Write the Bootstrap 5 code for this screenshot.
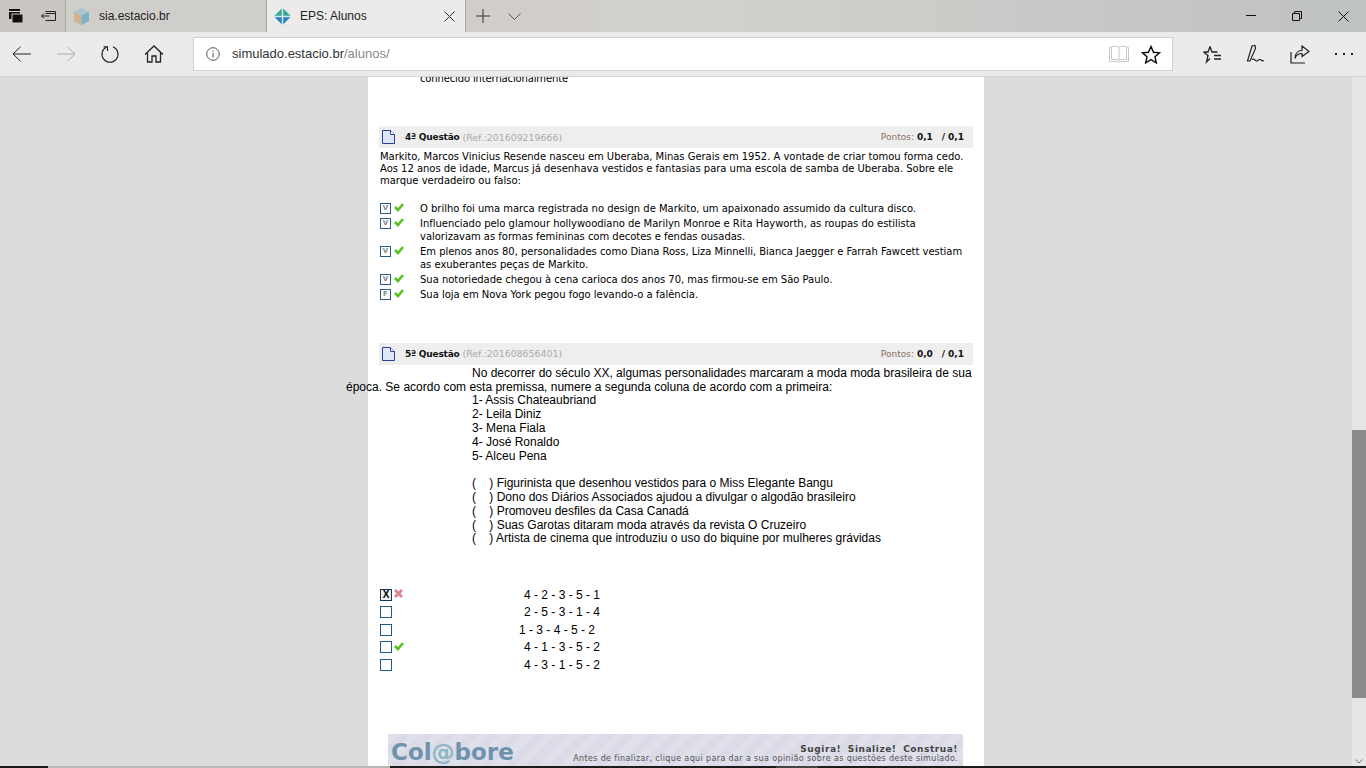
<!DOCTYPE html>
<html lang="pt-BR">
<head>
  <meta charset="UTF-8" />
  <title>EPS: Alunos</title>
  <link href="https://cdn.jsdelivr.net/npm/bootstrap@5.3.3/dist/css/bootstrap.min.css" rel="stylesheet" />
  <style>
    html, body { height: 768px; overflow: hidden; }
    body { font-family: "Liberation Sans", Arial, sans-serif; background: #dcdcdc; color: #000; }

    /* browser chrome */
    .tab-bar { height: 32px; background: linear-gradient(90deg, #c9c6c1 0, #d3d1cd 50%, #bfc2c2 100%); }
    .tab-tool { width: 32px; height: 32px; }
    .tab-tool.wide { width: 33px; }
    .tab-item { height: 32px; width: 201px; padding-left: 7px; gap: 9px; font-size: 12px; color: #222; border-left: 1px solid #a9a7a3; background: #d0ceca; }
    .tab-item.is-active { background: #ebebeb; width: 200px; border-right: 1px solid #a9a7a3; }
    .tab-close { margin-left: auto; margin-right: 10px; }
    .tab-new { padding-left: 10px; gap: 18px; }
    .win-btn { width: 46px; height: 32px; }
    .tool-bar { height: 45px; background: #ebebeb; border-bottom: 1px solid #d4d4d4; }
    .tool-btn { width: 44px; height: 44px; flex: none; }
    .addr-box { width: 980px; height: 34px; margin-left: 17px; background: #fff; border: 1px solid #d0d0d0; font-size: 13px; color: #333; padding-left: 12px; }
    .addr-box .dim { color: #888; }
    .addr-star { margin: 0 11px 0 4px; }

    /* page area */
    .page-view { height: 689px; overflow: hidden; }
    .page-canvas { flex: 1; height: 689px; overflow: hidden; }
    .sheet { width: 616px; margin-left: 368px; height: 693px; background: #fff; padding: 0 11px; }
    .sheet-top { font-family: "DejaVu Sans", Verdana, sans-serif; font-size: 10px; letter-spacing: -.14px; line-height: 12px; padding-left: 41px; margin-top: -4px; height: 53px; }
    .q-head { font-family: "DejaVu Sans", Verdana, sans-serif; font-size: 9px; height: 22px; background: #eeeeee; padding: 2px 9px 0 3px; }
    .q-head svg { margin-top: -2px; }
    .q-head > b { font-weight: 700; color: #111; margin-left: 10px; letter-spacing: -.2px; }
    .q-ref { color: #aaa; margin-left: 3px; font-size: 9.400px; }
    .q-score { margin-left: auto; color: #8b6d5c; }
    .q-score b { margin-left: 3px; color: #111; }
    .q-text { font-family: "DejaVu Sans", Verdana, sans-serif; font-size: 10px; letter-spacing: -.025px; line-height: 12px; padding: 3px 1px 0 1px; }
    .tf-list { margin-top: 15px; font-family: "DejaVu Sans", Verdana, sans-serif; font-size: 10px; letter-spacing: -.025px; line-height: 13px; }
    .tf-row { display: flex; padding-left: 1px; margin-bottom: 2px; }
    .tf-mark { width: 40px; flex: none; display: flex; gap: 3px; align-items: flex-start; }
    .tf-box { width: 11px; height: 11px; border: 1px solid #2a5a8c; font-size: 7px; line-height: 9px; text-align: center; color: #888; font-weight: 700; margin-top: 1px; }
    .q-five { margin-top: 41.500px; }
    .arial-block { font-size: 12px; line-height: 13.800px; padding-left: 93px; }
    .arial-lead { font-size: 12px; line-height: 13.800px; margin: 2.400px 1px 0 -33px; text-indent: 126px; width: 626px; }
    .arial-gap { margin-top: 13.800px; }
    .opt-list { margin-top: 42.300px; font-size: 12px; }
    .opt-row { display: flex; height: 17.500px; padding-left: 1px; }
    .opt-mark { width: 40px; flex: none; display: flex; gap: 2px; align-items: flex-start; }
    .opt-box { width: 12px; height: 12px; border: 1px solid #1f5a8f; font-size: 10px; line-height: 10px; text-align: center; font-weight: 700; }
    .opt-box.picked { background: #eee; border-color: #12385c; }
    .opt-val { padding-left: 104px; line-height: 14px; margin-top: -1px; }
    .opt-val.near { padding-left: 99px; }
    .colab { width: 575px; height: 34px; margin: 58px 0 0 9px; background: repeating-linear-gradient(135deg, #dfe0ea 0 8px, #dadbe6 8px 16px); font-family: "DejaVu Sans", Verdana, sans-serif; padding: 0 5px 0 3px; }
    .colab-name { font-size: 23px; font-weight: 700; color: #6f93ad; line-height: 36px; }
    .colab-name i { font-style: normal; color: #8cb6c6; }
    .colab-side { text-align: right; line-height: 10px; padding-top: 10px; }
    .colab-side b { display: block; font-size: 9px; letter-spacing: .55px; word-spacing: 3px; color: #444; }
    .colab-side span { display: block; font-size: 8px; letter-spacing: .37px; color: #555; }

    .scroll-rail { width: 14px; height: 689px; background: #e6e6e6; position: relative; }
    .scroll-thumb { position: absolute; top: 353px; left: 0; width: 14px; height: 268px; background: #8a8a8a; }
    .scroll-down { position: absolute; bottom: 2px; left: 3px; }

    /* edge of the taskbar under the window */
    .task-strip { height: 2px; background: #1c1c1c; }
    .strip-gap { width: 342px; margin-left: 48px; background: #b8b8b8; }
    .strip-soft { width: 42px; margin-left: 386px; background: #444; }
  </style>
</head>
<body>
  <!-- tab strip -->
  <div class="tab-bar d-flex">
    <div class="tab-tool d-flex align-items-center justify-content-center">
      <svg width="16" height="16" viewBox="0 0 16 16"><rect x="1" y="1" width="11" height="10" fill="#111"/><rect x="1" y="3" width="11" height="1" fill="#ddd"/><rect x="4" y="6" width="11" height="9" fill="#111" stroke="#cfccc8"/></svg>
    </div>
    <div class="tab-tool wide d-flex align-items-center justify-content-center">
      <svg width="16" height="16" viewBox="0 0 16 16" fill="none" stroke="#222"><path d="M4.500 3.500h10v9h-10M.5 8h8M3 5.500L.5 8 3 10.500M4.500 5.500h10"/></svg>
    </div>
    <div class="tab-item d-flex align-items-center">
      <svg width="17" height="17" viewBox="0 0 16 16"><path d="M8 0l7 3.500v9L8 16l-7-3.500v-9z" fill="#a9c6cc"/><path d="M1 3.500L8 7v9l-7-3.500z" fill="#d2b48c"/><path d="M8 7l7-3.500v9L8 16z" fill="#7fb2c4"/></svg>
      <span>sia.estacio.br</span>
    </div>
    <div class="tab-item is-active d-flex align-items-center">
      <svg width="17" height="17" viewBox="0 0 16 16"><path d="M8 0l8 8-8 8-8-8z" fill="#2a7fc0"/><path d="M8 0l8 8H0z" fill="#3aa98f"/><path d="M7.300 0h1.400v16H7.300zM0 7.300h16v1.400H0z" fill="#cfeaea"/></svg>
      <span>EPS: Alunos</span>
      <svg class="tab-close" width="11" height="11" viewBox="0 0 11 11" stroke="#333"><path d="M.5.500l10 10M10.500.500l-10 10"/></svg>
    </div>
    <div class="tab-new d-flex align-items-center">
      <svg width="14" height="14" viewBox="0 0 14 14" stroke="#333"><path d="M7 0v14M0 7h14"/></svg>
      <svg width="13" height="7" viewBox="0 0 13 7" fill="none" stroke="#555"><path d="M.5.500l6 6 6-6"/></svg>
    </div>
    <div class="ms-auto d-flex">
      <div class="win-btn d-flex align-items-center justify-content-center"><svg width="10" height="2"><path d="M0 .5h10" stroke="#111"/></svg></div>
      <div class="win-btn d-flex align-items-center justify-content-center"><svg width="10" height="10" fill="none" stroke="#111"><path d="M.5 2.500h7v7h-7zM2.500 2.500v-2h7v7h-2"/></svg></div>
      <div class="win-btn d-flex align-items-center justify-content-center"><svg width="11" height="11" stroke="#111"><path d="M.5.500l10 10M10.500.500l-10 10"/></svg></div>
    </div>
  </div>

  <!-- address bar -->
  <div class="tool-bar d-flex align-items-center">
    <div class="tool-btn d-flex align-items-center justify-content-center">
      <svg width="20" height="16" viewBox="0 0 20 16" fill="none" stroke="#222"><path d="M19 8H1M8.500.800L1 8l7.500 7.200"/></svg>
    </div>
    <div class="tool-btn d-flex align-items-center justify-content-center">
      <svg width="20" height="16" viewBox="0 0 20 16" fill="none" stroke="#aaa"><path d="M1 8h18M11.500.800L19 8l-7.500 7.200"/></svg>
    </div>
    <div class="tool-btn d-flex align-items-center justify-content-center">
      <svg width="20" height="20" viewBox="0 0 20 20" fill="none" stroke="#222" stroke-width="1.100"><path d="M7 2.800A8 8 0 1 0 13 2.800M7.500 7V2.800H3.500"/></svg>
    </div>
    <div class="tool-btn d-flex align-items-center justify-content-center">
      <svg width="20" height="18" viewBox="0 0 20 18" fill="none" stroke="#222" stroke-width="1.300"><path d="M1 9.500L10 1l9 8.500M3.500 8v9h4.500v-6h4v6h4.500V8"/></svg>
    </div>
    <div class="addr-box d-flex align-items-center gap-2">
      <svg width="14" height="14" viewBox="0 0 14 14" fill="none" stroke="#555"><circle cx="7" cy="7" r="6.300"/><path d="M7 6v4.500M7 3.500v1.200"/></svg>
      <span class="ms-1">simulado.estacio.br<span class="dim">/alunos/</span></span>
      <svg class="ms-auto" width="20" height="18" viewBox="0 0 20 18" fill="none" stroke="#c8c8c8"><path d="M.5 2.500h1M18.500 2.500h1v14h-8l-1.500 1-1.500-1h-8v-14M2.500 1.500h6l1.500 1 1.500-1h6v13h-6l-1.500 1-1.500-1h-6zM10 2.500v13"/></svg>
      <svg class="addr-star" width="20" height="19" viewBox="0 0 20 19" fill="none" stroke="#111" stroke-width="1.500"><path d="M10 1.500l2.500 5.700 6 .6-4.500 4 1.300 6L10 14.700l-5.300 3.100 1.300-6-4.500-4 6-.6z"/></svg>
    </div>
    <div class="d-flex align-items-center ms-auto">
      <div class="tool-btn d-flex align-items-center justify-content-center">
        <svg width="20" height="19" viewBox="0 0 20 19" fill="none" stroke="#222" stroke-width="1.300"><path d="M8 1.500L10 7H15.500M1.500 7H6L8 1.500M1.500 7L6 10.500 4.500 17 8 13.500M12 10.500h7M12 14h7"/></svg>
      </div>
      <div class="tool-btn d-flex align-items-center justify-content-center">
        <svg width="20" height="20" viewBox="0 0 20 20" fill="none" stroke="#222" stroke-width="1.200"><path d="M1.500 17L6 2l3-.5.500 3L4 17zM6 15.500c3-1.500 3 2 5 1.500s2-3 4-1c1 1 2 1 3 .5"/></svg>
      </div>
      <div class="tool-btn d-flex align-items-center justify-content-center">
        <svg width="20" height="19" viewBox="0 0 20 19" fill="none" stroke="#222" stroke-width="1.200"><path d="M1 7v11h14M12 1l7 5.500-7 5V8.500c-4 0-6 1.500-7 5 0-5 3-8 7-8z"/></svg>
      </div>
      <div class="tool-btn d-flex align-items-center justify-content-center">
        <svg width="20" height="3" fill="#222"><rect x="1" y="0" width="2" height="2"/><rect x="9" y="0" width="2" height="2"/><rect x="17" y="0" width="2" height="2"/></svg>
      </div>
    </div>
  </div>

  <!-- page -->
  <div class="page-view d-flex">
    <div class="page-canvas">
      <div class="sheet">
        <div class="sheet-top">conhecido internacionalmente</div>

        <div class="q-head d-flex align-items-center">
          <svg width="13" height="14" viewBox="0 0 13 14"><path d="M.5.500h8l4 4v9H.5z" fill="#dfe6f7" stroke="#2b3f9e"/><path d="M8.500.500v4h4" fill="#fff" stroke="#2b3f9e"/></svg>
          <b>4ª Questão</b><span class="q-ref">(Ref.:201609219666)</span>
          <span class="q-score">Pontos:<b>0,1</b> &nbsp;<b>/ 0,1</b></span>
        </div>
        <div class="q-text">Markito, Marcos Vinicius Resende nasceu em Uberaba, Minas Gerais em 1952. A vontade de criar tomou forma cedo. Aos 12 anos de idade, Marcus já desenhava vestidos e fantasias para uma escola de samba de Uberaba. Sobre ele marque verdadeiro ou falso:</div>

        <div class="tf-list">
          <div class="tf-row">
            <div class="tf-mark"><div class="tf-box">V</div><svg width="10" height="10" viewBox="0 0 10 10"><path d="M1 5l3 3 5-6" fill="none" stroke="#58c322" stroke-width="2.600"/></svg></div>
            <div>O brilho foi uma marca registrada no design de Markito, um apaixonado assumido da cultura disco.</div>
          </div>
          <div class="tf-row">
            <div class="tf-mark"><div class="tf-box">V</div><svg width="10" height="10" viewBox="0 0 10 10"><path d="M1 5l3 3 5-6" fill="none" stroke="#58c322" stroke-width="2.600"/></svg></div>
            <div>Influenciado pelo glamour hollywoodiano de Marilyn Monroe e Rita Hayworth, as roupas do estilista valorizavam as formas femininas com decotes e fendas ousadas.</div>
          </div>
          <div class="tf-row">
            <div class="tf-mark"><div class="tf-box">V</div><svg width="10" height="10" viewBox="0 0 10 10"><path d="M1 5l3 3 5-6" fill="none" stroke="#58c322" stroke-width="2.600"/></svg></div>
            <div>Em plenos anos 80, personalidades como Diana Ross, Liza Minnelli, Bianca Jaegger e Farrah Fawcett vestiam as exuberantes peças de Markito.</div>
          </div>
          <div class="tf-row">
            <div class="tf-mark"><div class="tf-box">V</div><svg width="10" height="10" viewBox="0 0 10 10"><path d="M1 5l3 3 5-6" fill="none" stroke="#58c322" stroke-width="2.600"/></svg></div>
            <div>Sua notoriedade chegou à cena carioca dos anos 70, mas firmou-se em São Paulo.</div>
          </div>
          <div class="tf-row">
            <div class="tf-mark"><div class="tf-box">F</div><svg width="10" height="10" viewBox="0 0 10 10"><path d="M1 5l3 3 5-6" fill="none" stroke="#58c322" stroke-width="2.600"/></svg></div>
            <div>Sua loja em Nova York pegou fogo levando-o a falência.</div>
          </div>
        </div>

        <div class="q-head q-five d-flex align-items-center">
          <svg width="13" height="14" viewBox="0 0 13 14"><path d="M.5.500h8l4 4v9H.5z" fill="#dfe6f7" stroke="#2b3f9e"/><path d="M8.500.500v4h4" fill="#fff" stroke="#2b3f9e"/></svg>
          <b>5ª Questão</b><span class="q-ref">(Ref.:201608656401)</span>
          <span class="q-score">Pontos:<b>0,0</b> &nbsp;<b>/ 0,1</b></span>
        </div>
        <p class="arial-lead mb-0">No decorrer do século XX, algumas personalidades marcaram a moda moda brasileira de sua época. Se acordo com esta premissa, numere a segunda coluna de acordo com a primeira:</p>
        <div class="arial-block">
          <div>1- Assis Chateaubriand</div>
          <div>2- Leila Diniz</div>
          <div>3- Mena Fiala</div>
          <div>4- José Ronaldo</div>
          <div>5- Alceu Pena</div>
          <div class="arial-gap">(&nbsp;&nbsp;&nbsp; ) Figurinista que desenhou vestidos para o Miss Elegante Bangu</div>
          <div>(&nbsp;&nbsp;&nbsp; ) Dono dos Diários Associados ajudou a divulgar o algodão brasileiro</div>
          <div>(&nbsp;&nbsp;&nbsp; ) Promoveu desfiles da Casa Canadá</div>
          <div>(&nbsp;&nbsp;&nbsp; ) Suas Garotas ditaram moda através da revista O Cruzeiro</div>
          <div>(&nbsp;&nbsp;&nbsp; ) Artista de cinema que introduziu o uso do biquine por mulheres grávidas</div>
        </div>

        <div class="opt-list">
          <div class="opt-row">
            <div class="opt-mark"><div class="opt-box picked">X</div><svg width="9" height="9" viewBox="0 0 9 9"><path d="M1 1l7 7M8 1L1 8" stroke="#d98a90" stroke-width="3"/></svg></div>
            <div class="opt-val">4 - 2 - 3 - 5 - 1</div>
          </div>
          <div class="opt-row">
            <div class="opt-mark"><div class="opt-box"></div></div>
            <div class="opt-val">2 - 5 - 3 - 1 - 4</div>
          </div>
          <div class="opt-row">
            <div class="opt-mark"><div class="opt-box"></div></div>
            <div class="opt-val near">1 - 3 - 4 - 5 - 2</div>
          </div>
          <div class="opt-row">
            <div class="opt-mark"><div class="opt-box"></div><svg width="10" height="10" viewBox="0 0 10 10"><path d="M1 5l3 3 5-6" fill="none" stroke="#58c322" stroke-width="2.600"/></svg></div>
            <div class="opt-val">4 - 1 - 3 - 5 - 2</div>
          </div>
          <div class="opt-row">
            <div class="opt-mark"><div class="opt-box"></div></div>
            <div class="opt-val">4 - 3 - 1 - 5 - 2</div>
          </div>
        </div>

        <div class="colab d-flex justify-content-between">
          <div class="colab-name">Col<i>@</i>bore</div>
          <div class="colab-side">
            <b>Sugira! Sinalize! Construa!</b>
            <span>Antes de finalizar, clique aqui para dar a sua opinião sobre as questões deste simulado.</span>
          </div>
        </div>
      </div>
    </div>
    <div class="scroll-rail">
      <div class="scroll-thumb"></div>
      <svg class="scroll-down" width="8" height="5" viewBox="0 0 8 5" fill="none" stroke="#777"><path d="M.5.500L4 4 7.500.500"/></svg>
    </div>
  </div>
  <div class="task-strip d-flex">
    <div class="strip-gap"></div>
    <div class="strip-soft"></div>
  </div>
</body>
</html>
